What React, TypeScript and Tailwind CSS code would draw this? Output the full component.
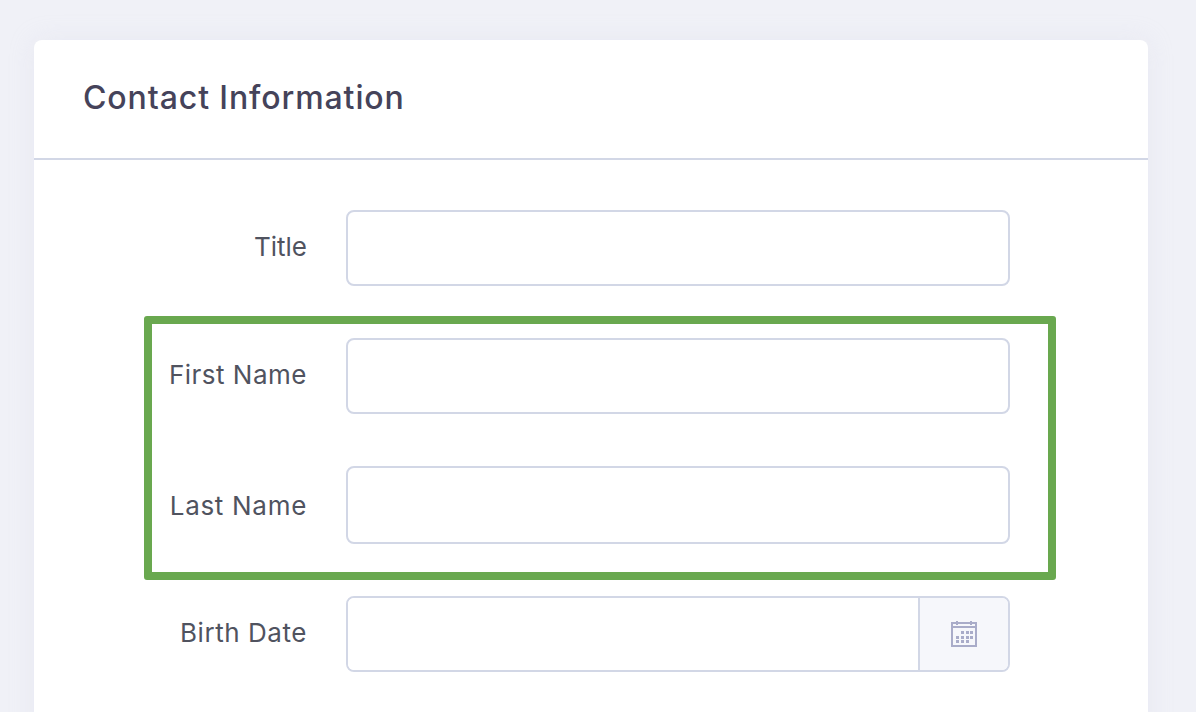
const CalendarIcon = () => (
  <svg width="26" height="26" viewBox="0 0 26 26" fill="none">
    <rect x="1" y="2" width="24" height="23" stroke="#a9acc9" strokeWidth="2" />
    <rect x="1" y="5" width="24" height="2" fill="#a9acc9" />
    <rect x="5" y="0" width="2" height="4" fill="#a9acc9" />
    <rect x="19" y="0" width="2" height="4" fill="#a9acc9" />
    {[
      [10, 10], [15, 10], [19, 10],
      [5, 15], [10, 15], [15, 15], [19, 15],
      [5, 19], [10, 19], [15, 19],
    ].map(([x, y]) => (
      <rect key={`${x}-${y}`} x={x} y={y} width="3" height="3" fill="#a9acc9" />
    ))}
  </svg>
);

const inputClass = 'block w-[664px] rounded-lg border-2 border-[#d2d7e6] bg-white';
const labelClass = 'text-right text-[26px] text-[#50535f]';

const App = () => {
  return (
    <div className="h-[712px] overflow-hidden bg-[#f0f1f7] px-[34px] pt-10 font-['Inter','Liberation_Sans',sans-serif]">
      <div className="h-[700px] w-[1114px] rounded-lg bg-white shadow-[0_0_24px_rgba(210,212,230,0.25)]">
        <div className="flex h-[120px] items-center border-b-2 border-[#d2d7e6] pb-0.5 pl-[49px]">
          <h2 className="text-[32px] font-medium tracking-[0.9px] text-[#45435a]">Contact Information</h2>
        </div>

        <div className="pt-[50px]">
          <div className="flex items-center">
            <label className={`mb-1 w-[273px] ${labelClass}`}>Title</label>
            <input className={`ml-[39px] h-[76px] ${inputClass}`} />
          </div>

          <div className="mt-[30px] ml-[110px] h-[264px] w-[912px] rounded-[3px] border-8 border-[#69a84f] pt-[14px]">
            <div className="flex items-center">
              <label className={`mb-1 w-[155px] tracking-[0.5px] ${labelClass}`}>First Name</label>
              <input className={`ml-[39px] h-[76px] ${inputClass}`} />
            </div>
            <div className="mt-[52px] flex items-center">
              <label className={`w-[155px] tracking-[0.7px] ${labelClass}`}>Last Name</label>
              <input className={`ml-[39px] h-[78px] ${inputClass}`} />
            </div>
          </div>

          <div className="mt-4 flex items-center">
            <label className={`mb-1 w-[273px] tracking-[0.55px] ${labelClass}`}>Birth Date</label>
            <div className="ml-[39px] flex h-[76px] w-[664px] overflow-hidden rounded-lg border-2 border-[#d2d7e6]">
              <input className="min-w-0 flex-1 bg-white" />
              <div className="flex w-[90px] items-center justify-center border-l-2 border-[#d2d7e6] bg-[#f6f7fb]">
                <CalendarIcon />
              </div>
            </div>
          </div>
        </div>
      </div>
    </div>
  );
};

export default App;
